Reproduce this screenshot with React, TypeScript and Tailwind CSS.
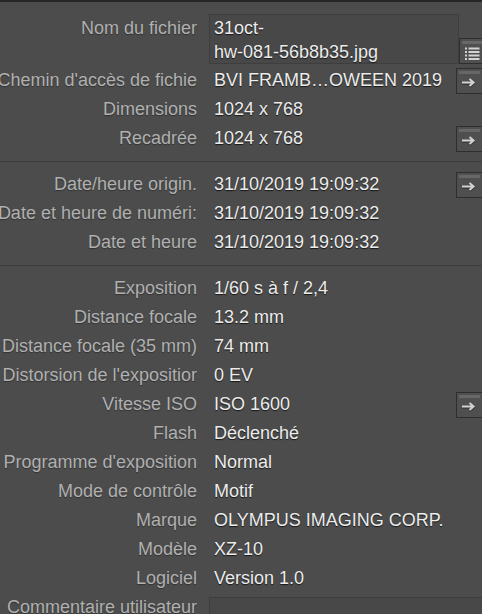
import React from "react";

// Métadonnées EXIF — panneau façon Lightroom

type Row = { label: string; value: string; action?: boolean };

const sectionA: Row[] = [
  { label: "Chemin d'accès de fichie", value: "BVI FRAMB…OWEEN 2019", action: true },
  { label: "Dimensions", value: "1024 x 768" },
  { label: "Recadrée", value: "1024 x 768", action: true },
];

const sectionB: Row[] = [
  { label: "Date/heure origin.", value: "31/10/2019 19:09:32", action: true },
  { label: "Date et heure de numéri:", value: "31/10/2019 19:09:32" },
  { label: "Date et heure", value: "31/10/2019 19:09:32" },
];

const sectionC: Row[] = [
  { label: "Exposition", value: "1/60 s à f / 2,4" },
  { label: "Distance focale", value: "13.2 mm" },
  { label: "Distance focale (35 mm)", value: "74 mm" },
  { label: "Distorsion de l'expositior", value: "0 EV" },
  { label: "Vitesse ISO", value: "ISO 1600", action: true },
  { label: "Flash", value: "Déclenché" },
  { label: "Programme d'exposition", value: "Normal" },
  { label: "Mode de contrôle", value: "Motif" },
  { label: "Marque", value: "OLYMPUS IMAGING CORP." },
  { label: "Modèle", value: "XZ-10" },
  { label: "Logiciel", value: "Version 1.0" },
];

function Label({ children }: { children: React.ReactNode }) {
  return (
    <div className="flex h-[29px] w-[197px] shrink-0 items-center justify-end overflow-hidden text-[#b0b0b0] [text-shadow:0_1px_1px_rgba(0,0,0,0.35)]">
      <span className="shrink-0 whitespace-nowrap">{children}</span>
    </div>
  );
}

function ButtonShell({ children, className = "" }: { children: React.ReactNode; className?: string }) {
  return (
    <div
      className={`flex w-[26px] shrink-0 flex-col border border-r-0 border-[#2e2e2e] bg-[#4f4f4f] ${className}`}
    >
      <div className="mx-[2px] mt-[2px] h-[3px] bg-[#676767]" />
      <div className="flex flex-1 items-center pl-[4px]">{children}</div>
    </div>
  );
}

function ArrowButton() {
  return (
    <ButtonShell className="h-[26px]">
      <svg width="16" height="12" viewBox="0 0 16 12">
        <path d="M1 6.5 H12 M8.5 3 L12.5 6.5 L8.5 10" stroke="#222" strokeWidth="2.6" fill="none" opacity="0.5" />
        <path d="M1 5.5 H12 M8.5 2 L12.5 5.5 L8.5 9" stroke="#d2d2d2" strokeWidth="2" fill="none" />
      </svg>
    </ButtonShell>
  );
}

function ListButton() {
  return (
    <ButtonShell className="mt-[24px] h-[26px]">
      <svg width="16" height="14" viewBox="0 0 16 14">
        {[1.5, 5, 8.5, 12].map((y) => (
          <g key={y}>
            <rect x="1" y={y - 1} width="2" height="2" fill="#d2d2d2" />
            <rect x="4.5" y={y - 1} width="11" height="2" fill="#d2d2d2" />
          </g>
        ))}
      </svg>
    </ButtonShell>
  );
}

function DataRow({ row }: { row: Row }) {
  return (
    <div className="flex h-[29px] items-center">
      <Label>{row.label}</Label>
      <div className="ml-[17px] min-w-0 flex-1 truncate whitespace-nowrap text-[#ececec] [text-shadow:0_1px_1px_rgba(0,0,0,0.7)]">
        {row.value}
      </div>
      {row.action && <ArrowButton />}
    </div>
  );
}

function Section({ rows, last }: { rows: Row[]; last?: boolean }) {
  return (
    <div className={last ? "pt-[8px]" : "border-b border-[#3d3d3d] pb-[8px] pt-[8px]"}>
      {rows.map((r) => (
        <DataRow key={r.label} row={r} />
      ))}
    </div>
  );
}

export default function App() {
  return (
    <div className="h-[614px] w-[482px] overflow-hidden bg-[#4c4c4c] font-['Liberation_Sans',Arial,sans-serif] text-[18px]">
      <div className="h-[2px] bg-[#262626]" />

      {/* Fichier */}
      <div className="border-b border-[#3d3d3d] pb-[8px] pt-[12px]">
        <div className="flex h-[52px] items-start">
          <Label>Nom du fichier</Label>
          <div className="ml-[12px] h-[50px] w-[250px] shrink-0 overflow-hidden border border-[#3e3e3e] bg-[#484848] pl-[4px] pt-[1px] leading-[24px] text-[#ececec] [text-shadow:0_1px_1px_rgba(0,0,0,0.7)]">
            <div>31oct-</div>
            <div>hw-081-56b8b35.jpg</div>
          </div>
          <ListButton />
        </div>
        {sectionA.map((r) => (
          <DataRow key={r.label} row={r} />
        ))}
      </div>

      <Section rows={sectionB} />
      <Section rows={sectionC} last />

      {/* Commentaire utilisateur */}
      <div className="flex items-start">
        <Label>Commentaire utilisateur</Label>
        <div className="ml-[12px] mt-[4px] h-[40px] flex-1 border border-r-0 border-[#3e3e3e] bg-[#484848]" />
      </div>
    </div>
  );
}
